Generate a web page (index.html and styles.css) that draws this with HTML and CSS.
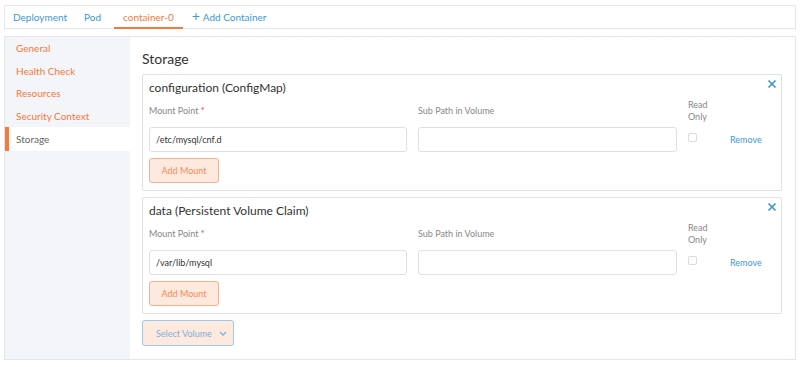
FILE: index.html
```html
<!DOCTYPE html>
<html>
<head>
<meta charset="utf-8">
<link rel="stylesheet" href="styles.css">
</head>
<body>
<nav class="tabs">
  <a class="tab">Deployment</a>
  <a class="tab">Pod</a>
  <a class="tab active">container-0</a>
  <a class="tab add"><span class="plus">+</span> Add Container</a>
</nav>
<div class="main">
  <aside class="side">
    <div class="side-item">General</div>
    <div class="side-item">Health Check</div>
    <div class="side-item">Resources</div>
    <div class="side-item">Security Context</div>
    <div class="side-item selected">Storage</div>
  </aside>
  <section class="content">
    <h2 class="heading">Storage</h2>
    <div class="card">
      <svg class="close" width="10" height="10" viewBox="0 0 10 10"><path d="M1.5 1.5L8.5 8.5M8.5 1.5L1.5 8.5" stroke="#3d98d3" stroke-width="1.7" fill="none"/></svg>
      <h3 class="card-title">configuration (ConfigMap)</h3>
      <div class="grid">
        <div class="label">Mount Point <span class="req">*</span></div>
        <div class="label">Sub Path in Volume</div>
        <div class="label ro">Read Only</div>
        <div></div>
        <div class="input">/etc/mysql/cnf.d</div>
        <div class="input"></div>
        <div class="cb-cell"><span class="cb"></span></div>
        <div class="remove">Remove</div>
      </div>
      <button class="btn-add">Add Mount</button>
    </div>
    <div class="card">
      <svg class="close" width="10" height="10" viewBox="0 0 10 10"><path d="M1.5 1.5L8.5 8.5M8.5 1.5L1.5 8.5" stroke="#3d98d3" stroke-width="1.7" fill="none"/></svg>
      <h3 class="card-title">data (Persistent Volume Claim)</h3>
      <div class="grid">
        <div class="label">Mount Point <span class="req">*</span></div>
        <div class="label">Sub Path in Volume</div>
        <div class="label ro">Read Only</div>
        <div></div>
        <div class="input">/var/lib/mysql</div>
        <div class="input"></div>
        <div class="cb-cell"><span class="cb"></span></div>
        <div class="remove">Remove</div>
      </div>
      <button class="btn-add">Add Mount</button>
    </div>
    <button class="select-vol">Select Volume
      <svg class="chev" width="8" height="5" viewBox="0 0 8 5"><path d="M1 1L4 4L7 1" stroke="#7fb0dc" stroke-width="1.3" fill="none"/></svg>
    </button>
  </section>
</div>
</body>
</html>
```
FILE: styles.css
```css
* { box-sizing: border-box; }
body {
  margin: 0;
  background: #fff;
  font-family: Lato, "Open Sans", sans-serif;
  font-size: 10px;
  color: #555;
}
.tabs {
  margin: 5px 4px 0;
  height: 24px;
  border: 1px solid #e4e6ec;
  display: flex;
  align-items: stretch;
}
.tab {
  display: flex;
  align-items: center;
  color: #3d98d3;
  font-size: 10px;
  border-bottom: 2px solid transparent;
  margin-bottom: -1px;
}
.tab:nth-child(1) { padding: 0 5px 0 8px; }
.tab:nth-child(2) { padding: 0 13px 0 12px; }
.tab.active {
  color: #f5793b;
  border-bottom-color: #f5793b;
  padding: 0 9px;
}
.tab.add { padding: 0 9px; }
.plus { font-size: 14px; margin-right: 3px; line-height: 1; position: relative; top: -1px; }
.main {
  margin: 7px 4px 0;
  height: 324px;
  border: 1px solid #e4e6ec;
  display: flex;
}
.side {
  width: 125px;
  background: #f4f5f9;
  flex: none;
}
.side-item {
  height: 22.6px;
  display: flex;
  align-items: center;
  padding-left: 11px;
  color: #f5793b;
  font-size: 10px;
}
.side-item.selected {
  background: #fff;
  color: #666;
  border-left: 4px solid #f5793b;
  padding-left: 7px;
  height: 24px;
}
.content {
  flex: 1;
  padding: 12px 13px 0 12px;
}
.heading {
  margin: 0 0 5px;
  font-size: 14px;
  font-weight: 400;
  color: #333;
  line-height: 20px;
}
.card {
  position: relative;
  border: 1px solid #dde0e7;
  border-radius: 2px;
  padding: 5px 6px 7px;
  margin-bottom: 6px;
}
.close {
  position: absolute;
  top: 4px;
  right: 4px;
}
.card-title {
  margin: 0 0 2px;
  font-size: 12px;
  font-weight: 400;
  color: #333;
  line-height: 16px;
}
.grid {
  display: grid;
  grid-template-columns: 258px 259px 31px auto;
  grid-template-rows: 26px 25px;
  column-gap: 11px;
  row-gap: 3px;
  align-items: center;
}
.label {
  font-size: 9px;
  color: #888;
  line-height: 12px;
}
.label.ro { width: 24px; }
.req { color: #e0383e; }
.input {
  height: 25px;
  border: 1px solid #dde0e7;
  border-radius: 3px;
  font-size: 9px;
  color: #333;
  display: flex;
  align-items: center;
  padding-left: 6px;
}
.cb-cell { align-self: start; padding-top: 6px; }
.cb {
  display: block;
  width: 9px;
  height: 9px;
  border: 1px solid #d8dbe2;
  border-radius: 2px;
}
.remove {
  color: #3d98d3;
  font-size: 9px;
}
.btn-add {
  display: block;
  margin-top: 6px;
  width: 70px;
  height: 25px;
  background: #fde9dd;
  border: 1px solid #f8b08c;
  border-radius: 3px;
  color: #f98a55;
  font-family: Lato, sans-serif;
  font-size: 9px;
  padding: 0;
}
.select-vol {
  display: flex;
  align-items: center;
  justify-content: space-between;
  margin-top: 0;
  width: 92px;
  height: 26px;
  background: #fde9de;
  border: 1px solid #9cc9e8;
  border-radius: 3px;
  color: #7fb0dc;
  font-family: Lato, sans-serif;
  font-size: 9px;
  padding: 0 6px 0 13px;
}
```
